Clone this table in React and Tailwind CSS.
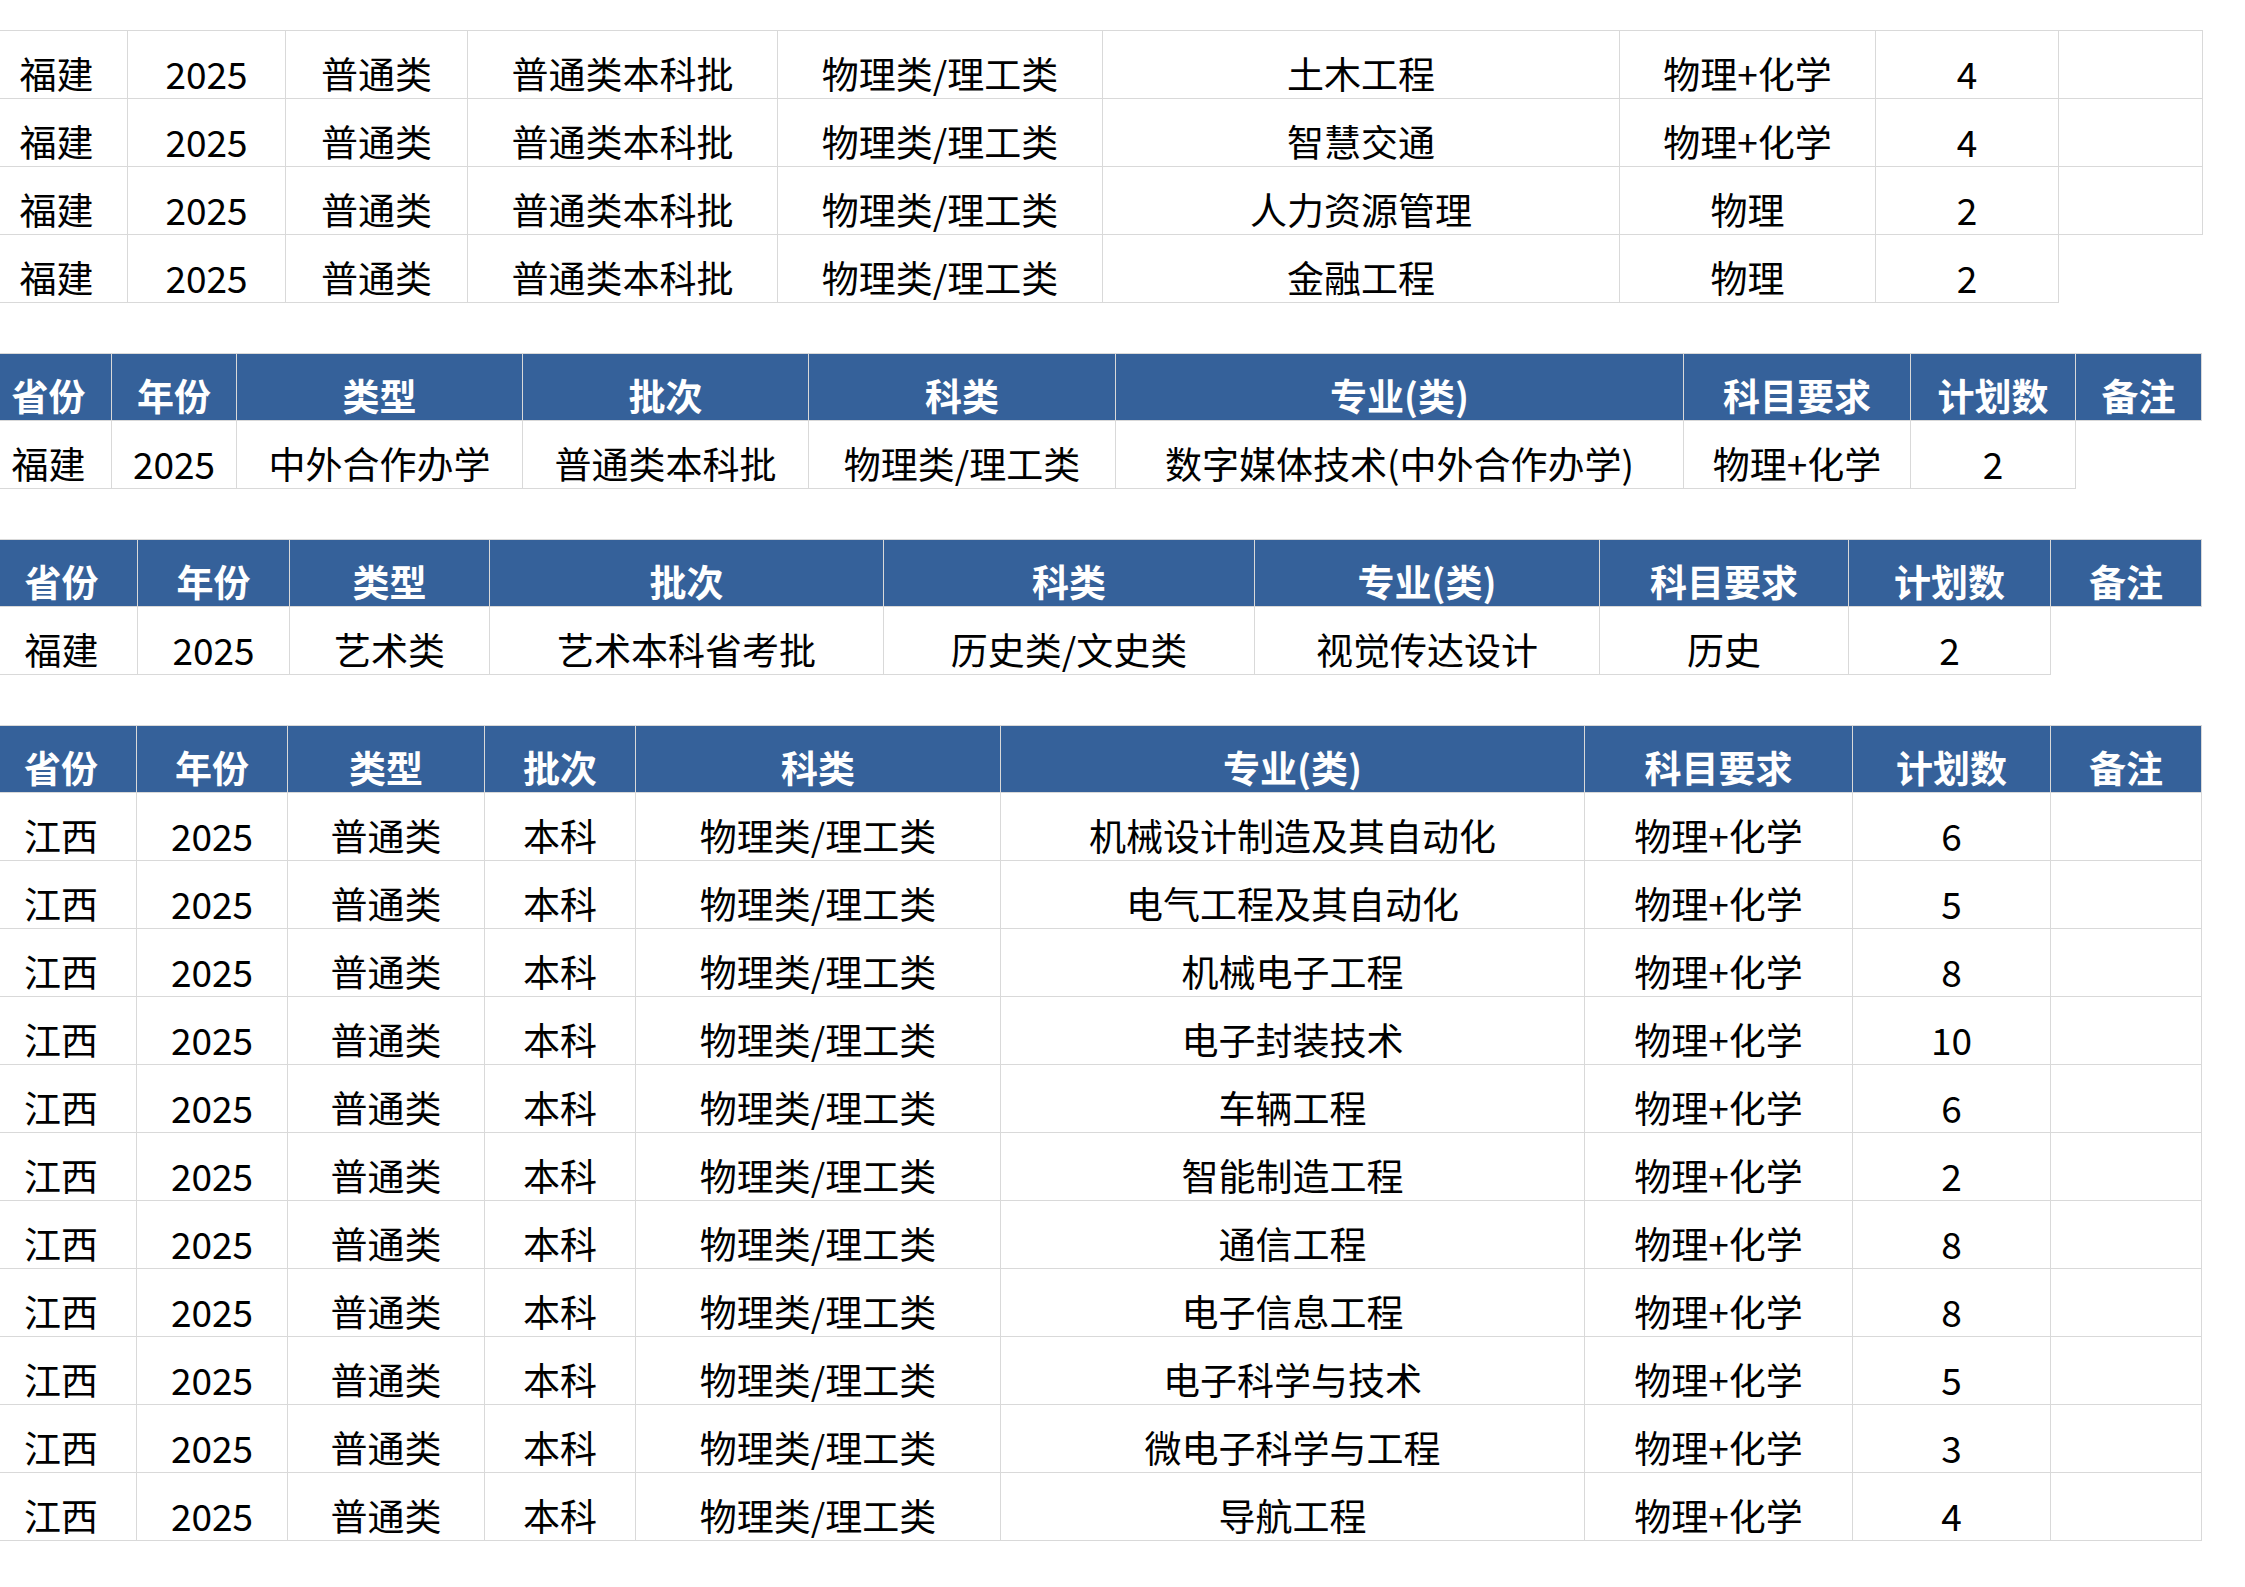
import React from "react";

const HEAD = ["省份", "年份", "类型", "批次", "科类", "专业(类)", "科目要求", "计划数", "备注"];

const t1Rows = [
  ["福建", "2025", "普通类", "普通类本科批", "物理类/理工类", "土木工程", "物理+化学", "4", ""],
  ["福建", "2025", "普通类", "普通类本科批", "物理类/理工类", "智慧交通", "物理+化学", "4", ""],
  ["福建", "2025", "普通类", "普通类本科批", "物理类/理工类", "人力资源管理", "物理", "2", ""],
  ["福建", "2025", "普通类", "普通类本科批", "物理类/理工类", "金融工程", "物理", "2", null],
];

const t2Rows = [
  ["福建", "2025", "中外合作办学", "普通类本科批", "物理类/理工类", "数字媒体技术(中外合作办学)", "物理+化学", "2", null],
];

const t3Rows = [
  ["福建", "2025", "艺术类", "艺术本科省考批", "历史类/文史类", "视觉传达设计", "历史", "2", null],
];

const majors = [
  ["机械设计制造及其自动化", "6"],
  ["电气工程及其自动化", "5"],
  ["机械电子工程", "8"],
  ["电子封装技术", "10"],
  ["车辆工程", "6"],
  ["智能制造工程", "2"],
  ["通信工程", "8"],
  ["电子信息工程", "8"],
  ["电子科学与技术", "5"],
  ["微电子科学与工程", "3"],
  ["导航工程", "4"],
];

const t4Rows = majors.map(([m, n]) => ["江西", "2025", "普通类", "本科", "物理类/理工类", m, "物理+化学", n, ""]);

function Table({ gridClass, header, rows, className = "" }) {
  return (
    <div className={`grid w-max border-t border-[#d9d9d9] ${gridClass} ${className}`}>
      {header &&
        HEAD.map((h, i) => (
          <div
            key={"h" + i}
            className={`flex h-[67px] items-end justify-center whitespace-nowrap border-b border-r border-[#d9d9d9] bg-[#35619a] pb-[5px] font-bold text-white ${
              i === 0 ? "pr-[14px]" : ""
            }`}
          >
            {h}
          </div>
        ))}
      {rows.map((r, ri) =>
        r.map((c, ci) =>
          c === null ? (
            <div key={ri + "-" + ci} className="h-[68px]" />
          ) : (
            <div
              key={ri + "-" + ci}
              className={`flex h-[68px] items-end justify-center whitespace-nowrap border-b border-r border-[#d9d9d9] pb-[5px] text-black ${
                ci === 0 ? "pr-[14px]" : ""
              }`}
            >
              {c}
            </div>
          )
        )
      )}
    </div>
  );
}

export default function App() {
  return (
    <div className="min-h-[1587px] w-[2245px] bg-white pt-[30px] font-['Noto_Sans_CJK_SC',sans-serif] text-[37px] leading-[40px]">
      <Table
        gridClass="grid-cols-[128px_158px_182px_310px_325px_517px_256px_183px_144px]"
        rows={t1Rows}
      />
      <Table
        className="mt-[50px]"
        gridClass="grid-cols-[112px_125px_286px_286px_307px_568px_227px_165px_126px]"
        header
        rows={t2Rows}
      />
      <Table
        className="mt-[50px]"
        gridClass="grid-cols-[138px_152px_200px_394px_371px_345px_249px_202px_151px]"
        header
        rows={t3Rows}
      />
      <Table
        className="mt-[50px]"
        gridClass="grid-cols-[137px_151px_197px_151px_365px_584px_268px_198px_151px]"
        header
        rows={t4Rows}
      />
    </div>
  );
}
